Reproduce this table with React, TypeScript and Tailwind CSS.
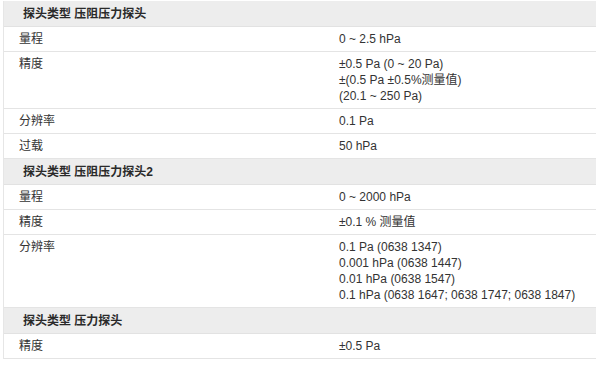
type Row =
  | { kind: "head"; title: string }
  | { kind: "row"; label: string; lines: string[] };

const rows: Row[] = [
  { kind: "head", title: "探头类型 压阻压力探头" },
  { kind: "row", label: "量程", lines: ["0 ~ 2.5 hPa"] },
  {
    kind: "row",
    label: "精度",
    lines: ["±0.5 Pa (0 ~ 20 Pa)", "±(0.5 Pa ±0.5%测量值)", "(20.1 ~ 250 Pa)"],
  },
  { kind: "row", label: "分辨率", lines: ["0.1 Pa"] },
  { kind: "row", label: "过载", lines: ["50 hPa"] },
  { kind: "head", title: "探头类型 压阻压力探头2" },
  { kind: "row", label: "量程", lines: ["0 ~ 2000 hPa"] },
  { kind: "row", label: "精度", lines: ["±0.1 % 测量值"] },
  {
    kind: "row",
    label: "分辨率",
    lines: [
      "0.1 Pa (0638 1347)",
      "0.001 hPa (0638 1447)",
      "0.01 hPa (0638 1547)",
      "0.1 hPa (0638 1647; 0638 1747; 0638 1847)",
    ],
  },
  { kind: "head", title: "探头类型 压力探头" },
  { kind: "row", label: "精度", lines: ["±0.5 Pa"] },
];

export default function App() {
  return (
    <div
      className="w-[596px] h-[370px] bg-white overflow-hidden text-[12px] text-[#333333]"
      style={{ fontFamily: '"Liberation Sans", "Noto Sans CJK SC", sans-serif' }}
    >
      <div className="ml-[3px] mt-[1px] w-[600px] border-l border-[#e6e6e6]">
        {rows.map((r, i) =>
          r.kind === "head" ? (
            <div
              key={i}
              className="h-[26px] flex items-center pl-[19px] bg-[#ededed] border-b border-[#e2e2e2] font-bold text-[#2a2a2a]"
            >
              {r.title}
            </div>
          ) : (
            <div key={i} className="flex py-[4px] leading-[16px] border-b border-[#e4e4e4]">
              <div className="w-[320px] pl-[15px] shrink-0">{r.label}</div>
              <div className="pl-[15px]">
                {r.lines.map((l, j) => (
                  <div key={j}>{l}</div>
                ))}
              </div>
            </div>
          )
        )}
      </div>
    </div>
  );
}
